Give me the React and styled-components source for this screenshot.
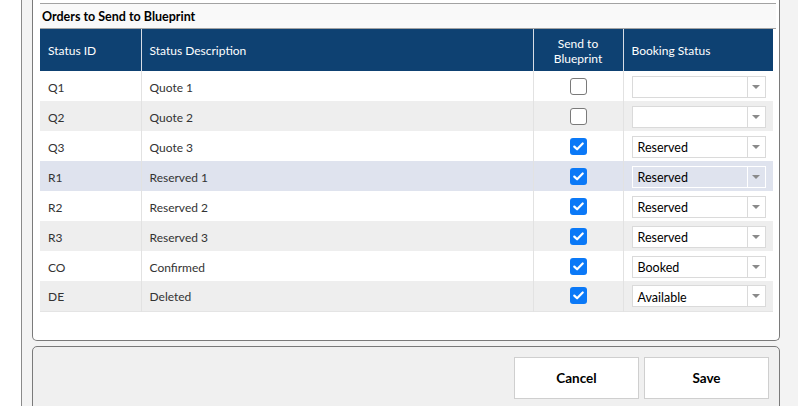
import styled, { createGlobalStyle } from 'styled-components';

const GlobalStyle = createGlobalStyle`
  html, body {
    margin: 0;
    padding: 0;
    background: #ffffff;
    font-family: Lato, "Noto Sans", sans-serif;
    overflow: hidden;
  }
`;

const Page = styled.div`
  height: 406px;
  margin-left: 21px;
  border-left: 1px solid #8a8a8a;
  background: #f3f3f3;
  padding: 0 18px 0 10px;
  display: flex;
  flex-direction: column;
  gap: 5px;
`;

const Panel = styled.section`
  background: ${({ tone }) => (tone === 'grey' ? '#f0f0f0' : '#ffffff')};
  border: 1px solid #7a7a7a;
  border-top: ${({ cutTop }) => (cutTop ? 'none' : '1px solid #7a7a7a')};
  border-radius: ${({ cutTop }) => (cutTop ? '0 0 5px 5px' : '5px 5px 0 0')};
  padding: ${({ pad }) => pad};
`;

const TitleBar = styled.div`
  height: 24px;
  background: #f9f9f9;
  border-top: 1px solid #a3a3a3;
  border-bottom: 1px solid #a3a3a3;
  font-size: 12.5px;
  font-weight: 700;
  color: #000;
  display: flex;
  align-items: center;
  padding-left: 2px;
`;

const Table = styled.table`
  width: 733px;
  border-collapse: collapse;
  table-layout: fixed;
  font-size: 12px;
  border-bottom: 1px solid #e4e4e4;
`;

const Th = styled.th`
  background: #0e4172;
  color: #ffffff;
  font-weight: 400;
  height: 42px;
  box-sizing: border-box;
  padding: 1px 8px 0;
  text-align: ${({ center }) => (center ? 'center' : 'left')};
  line-height: 15px;
  border-left: 1px solid #d7dde6;
  &:first-child {
    border-left: none;
  }
`;

const Row = styled.tr`
  background: ${({ bg }) => bg};
`;

const Td = styled.td`
  height: 30px;
  padding: ${({ center }) => (center ? '0 8px' : '2px 8px 0')};
  color: #333333;
  border-left: 1px solid #e2e2e2;
  text-align: ${({ center }) => (center ? 'center' : 'left')};
  vertical-align: middle;
  box-sizing: border-box;
  &:first-child {
    border-left: none;
  }
`;

const Box = styled.span`
  display: inline-flex;
  align-items: center;
  justify-content: center;
  width: 17px;
  height: 17px;
  box-sizing: border-box;
  border-radius: 3px;
  vertical-align: middle;
  background: ${({ checked }) => (checked ? '#0b79f7' : '#ffffff')};
  border: ${({ checked }) => (checked ? 'none' : '1.5px solid #7a7a7a')};
`;

const Select = styled.div`
  width: 134px;
  height: 22px;
  margin-top: -1px;
  box-sizing: border-box;
  display: flex;
  border: 1px solid ${({ plain }) => (plain ? '#ffffff' : '#dadada')};
  background: ${({ plain }) => (plain ? 'transparent' : '#ffffff')};
`;

const SelectText = styled.div`
  flex: 1;
  display: flex;
  align-items: center;
  padding: 2px 0 0 5px;
  color: #000;
  font-size: 12.5px;
`;

const Arrow = styled.div`
  width: 17px;
  border-left: 1px solid ${({ plain }) => (plain ? '#ffffff' : '#dadada')};
  display: flex;
  align-items: center;
  justify-content: center;
  &::after {
    content: '';
    border-left: 4px solid transparent;
    border-right: 4px solid transparent;
    border-top: 4px solid #8a8a8a;
  }
`;

const ButtonBar = styled.div`
  display: flex;
  justify-content: flex-end;
  gap: 5px;
`;

const Button = styled.button`
  width: 125px;
  height: 42px;
  background: #ffffff;
  border: 1px solid #cfcfcf;
  font-family: inherit;
  font-size: 13.5px;
  font-weight: 700;
  color: #000;
  cursor: pointer;
`;

const rows = [
  { id: 'Q1', desc: 'Quote 1', send: false, status: '' },
  { id: 'Q2', desc: 'Quote 2', send: false, status: '' },
  { id: 'Q3', desc: 'Quote 3', send: true, status: 'Reserved' },
  { id: 'R1', desc: 'Reserved 1', send: true, status: 'Reserved', active: true },
  { id: 'R2', desc: 'Reserved 2', send: true, status: 'Reserved' },
  { id: 'R3', desc: 'Reserved 3', send: true, status: 'Reserved' },
  { id: 'CO', desc: 'Confirmed', send: true, status: 'Booked' },
  { id: 'DE', desc: 'Deleted', send: true, status: 'Available' },
];

function Check({ checked }) {
  return (
    <Box checked={checked}>
      {checked && (
        <svg width="11" height="9" viewBox="0 0 11 9">
          <path
            d="M1.3 4.6 L4.1 7.3 L9.7 1.5"
            fill="none"
            stroke="#fff"
            strokeWidth="2.2"
            strokeLinecap="round"
            strokeLinejoin="round"
          />
        </svg>
      )}
    </Box>
  );
}

export default function App() {
  return (
    <>
      <GlobalStyle />
      <Page>
        <Panel cutTop pad="3px 3px 28px 7px">
          <TitleBar>Orders to Send to Blueprint</TitleBar>
          <Table>
            <colgroup>
              <col style={{ width: 101 }} />
              <col style={{ width: 392 }} />
              <col style={{ width: 90 }} />
              <col style={{ width: 150 }} />
            </colgroup>
            <thead>
              <tr>
                <Th>Status ID</Th>
                <Th>Status Description</Th>
                <Th center>
                  Send to
                  <br />
                  Blueprint
                </Th>
                <Th>Booking Status</Th>
              </tr>
            </thead>
            <tbody>
              {rows.map((r, i) => (
                <Row
                  key={r.id}
                  bg={r.active ? '#dfe3ee' : i % 2 ? '#eeeeee' : '#ffffff'}
                >
                  <Td>{r.id}</Td>
                  <Td>{r.desc}</Td>
                  <Td center>
                    <Check checked={r.send} />
                  </Td>
                  <Td center={false}>
                    <Select plain={r.active}>
                      <SelectText>{r.status}</SelectText>
                      <Arrow plain={r.active} />
                    </Select>
                  </Td>
                </Row>
              ))}
            </tbody>
          </Table>
        </Panel>
        <Panel tone="grey" pad="10px 10px 20px 10px">
          <ButtonBar>
            <Button>Cancel</Button>
            <Button>Save</Button>
          </ButtonBar>
        </Panel>
      </Page>
    </>
  );
}
